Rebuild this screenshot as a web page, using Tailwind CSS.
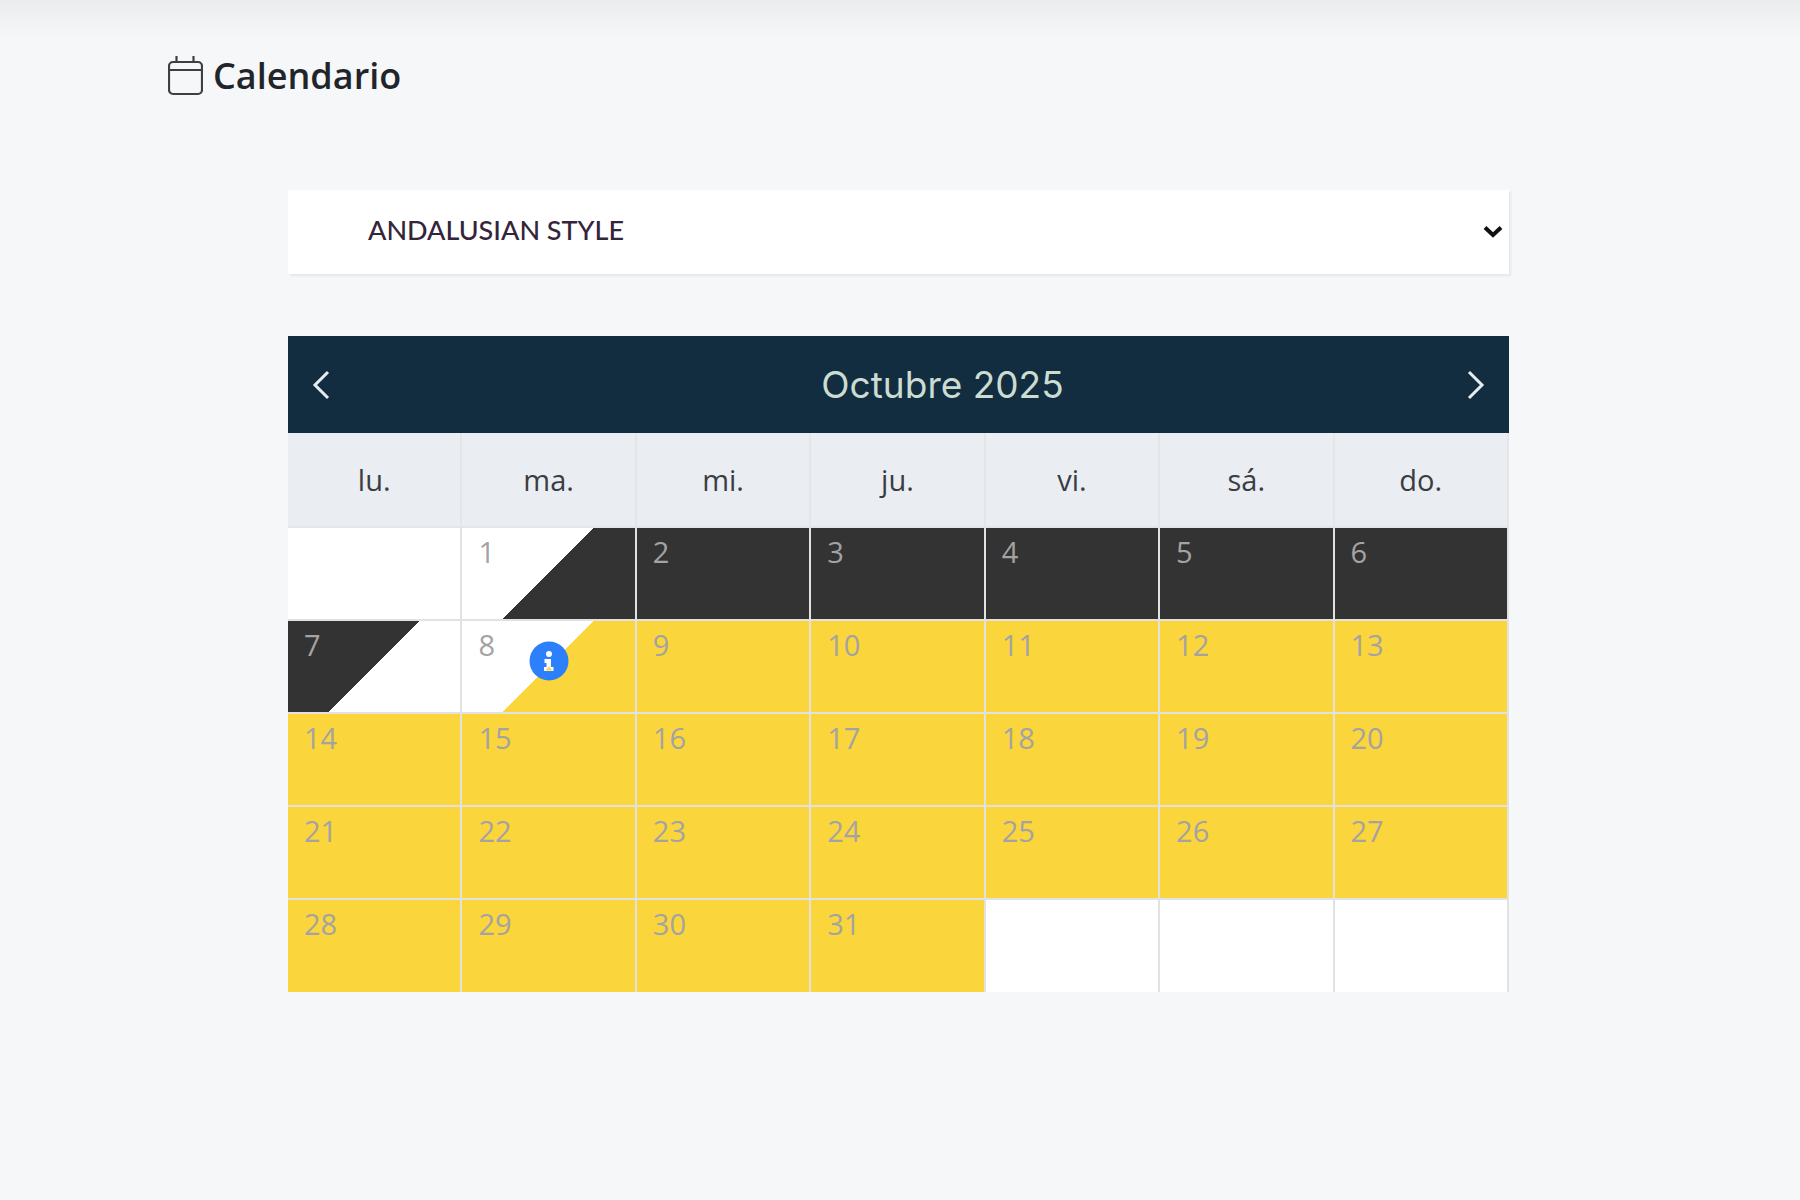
<!DOCTYPE html>
<html lang="es">
<head>
  <meta charset="UTF-8" />
  <title>Calendario</title>
  <meta name="viewport" content="width=device-width, initial-scale=1.0" />
  <script src="https://cdn.jsdelivr.net/npm/@tailwindcss/browser@4"></script>
</head>
<body class="min-h-screen bg-[#f6f7f9] text-[#212529] font-['Open_Sans','Noto_Sans',sans-serif]">

  <!-- Shadow of the top bar -->
  <div class="h-10 bg-linear-to-b from-[#ebecee] to-[#f6f7f9]"></div>

  <main class="pb-12">
    <h1 class="flex items-center gap-[10px] pl-[168px] h-[72px] text-[36px] font-semibold">
      <svg class="w-[35px] h-[40px]" viewBox="0 0 35 40" fill="none" stroke="#3b4045" stroke-width="2.200" aria-hidden="true">
        <rect x="1" y="6" width="33" height="32" rx="4" />
        <path d="M1 14h33M8.500 0v6M25.500 0v6" />
      </svg>
      Calendario
    </h1>

    <div class="pl-72 pr-[291px] pt-[78px]">
      <!-- Property -->
      <div class="relative">
        <select id="property" aria-label="Alojamiento" class="appearance-none block w-full h-[84px] pl-20 pr-12 pb-1 bg-white text-[#35253a] text-[27px] font-medium font-['Lato',sans-serif] shadow-[2px_2px_2px_#e6e7e9]">
          <option>ANDALUSIAN STYLE</option>
        </select>
        <svg class="absolute right-[6px] top-[35px] w-[20px] h-[14px] pointer-events-none" viewBox="0 0 20 14" fill="none" stroke="#111" stroke-width="4" aria-hidden="true">
          <path d="M2 2.500l8 7.500 8-7.500" />
        </svg>
      </div>

      <!-- Month -->
      <div class="mt-[62px] flex items-center h-[97px] px-6 bg-[#132d40] text-white">
        <button type="button" aria-label="Mes anterior" class="w-5 h-8">
          <svg class="w-5 h-8" viewBox="0 0 20 32" fill="none" stroke="#e6ecef" stroke-width="3"><path d="M16 3L3 16l13 13" /></svg>
        </button>
        <h2 class="grow pl-[88px] text-center text-[37px] leading-[48px] text-[#cbdcd2] font-['Inter',sans-serif]">Octubre 2025</h2>
        <button type="button" aria-label="Mes siguiente" class="w-5 h-8">
          <svg class="w-5 h-8" viewBox="0 0 20 32" fill="none" stroke="#e6ecef" stroke-width="3"><path d="M4 3l13 13L4 29" /></svg>
        </button>
      </div>

      <table class="w-full table-fixed border-separate border-spacing-0 [&_th]:h-[95px] [&_th]:border-r-2 [&_th]:border-b-2 [&_th]:border-[#e3e5e7] [&_th]:bg-[#eaedf2] [&_th]:font-normal [&_td]:relative [&_td]:border-r-2 [&_td]:border-b-2 [&_td]:border-[#e2e2e2] [&_td]:pl-4 [&_td]:pt-1 [&_td]:align-top [&_td]:text-[#a3a3a3] text-[29px] leading-10">
        <thead>
          <tr class="text-[#3a3d42]">
            <th>lu.</th>
            <th>ma.</th>
            <th>mi.</th>
            <th>ju.</th>
            <th>vi.</th>
            <th>sá.</th>
            <th>do.</th>
          </tr>
        </thead>
        <tbody>
          <tr class="h-[93px] bg-[#333]">
            <td class="bg-white"></td>
            <td class="bg-[linear-gradient(135deg,#fff_50%,#333_50%)]">1</td>
            <td>2</td>
            <td>3</td>
            <td>4</td>
            <td>5</td>
            <td>6</td>
          </tr>
          <tr class="h-[93px] bg-[#fbd53c]">
            <td class="bg-[linear-gradient(135deg,#333_50%,#fff_50%)]">7</td>
            <td class="bg-[linear-gradient(135deg,#fff_50%,#fbd53c_50%)]">
              8
              <button type="button" aria-label="Información" class="absolute inset-x-0 top-5 mx-auto w-10 h-10">
                <svg class="w-10 h-10" viewBox="0 0 40 40">
                  <circle cx="20" cy="20" r="19.500" fill="#2d80fb" />
                  <circle cx="20" cy="13" r="3" fill="#fff" />
                  <path d="M15.500 18h6.500v8h2.500v4h-9.500v-4h2.500v-4h-2z" fill="#fff" />
                  <path d="M20 25.500l3.500 4h-7z" fill="#fbd53c" />
                </svg>
              </button>
            </td>
            <td>9</td>
            <td>10</td>
            <td>11</td>
            <td>12</td>
            <td>13</td>
          </tr>
          <tr class="h-[93px] bg-[#fbd53c]">
            <td>14</td>
            <td>15</td>
            <td>16</td>
            <td>17</td>
            <td>18</td>
            <td>19</td>
            <td>20</td>
          </tr>
          <tr class="h-[93px] bg-[#fbd53c]">
            <td>21</td>
            <td>22</td>
            <td>23</td>
            <td>24</td>
            <td>25</td>
            <td>26</td>
            <td>27</td>
          </tr>
          <tr class="h-[92px] bg-[#fbd53c] [&>td]:border-b-0">
            <td>28</td>
            <td>29</td>
            <td>30</td>
            <td>31</td>
            <td class="bg-white"></td>
            <td class="bg-white"></td>
            <td class="bg-white"></td>
          </tr>
        </tbody>
      </table>
    </div>
  </main>
</body>
</html>
